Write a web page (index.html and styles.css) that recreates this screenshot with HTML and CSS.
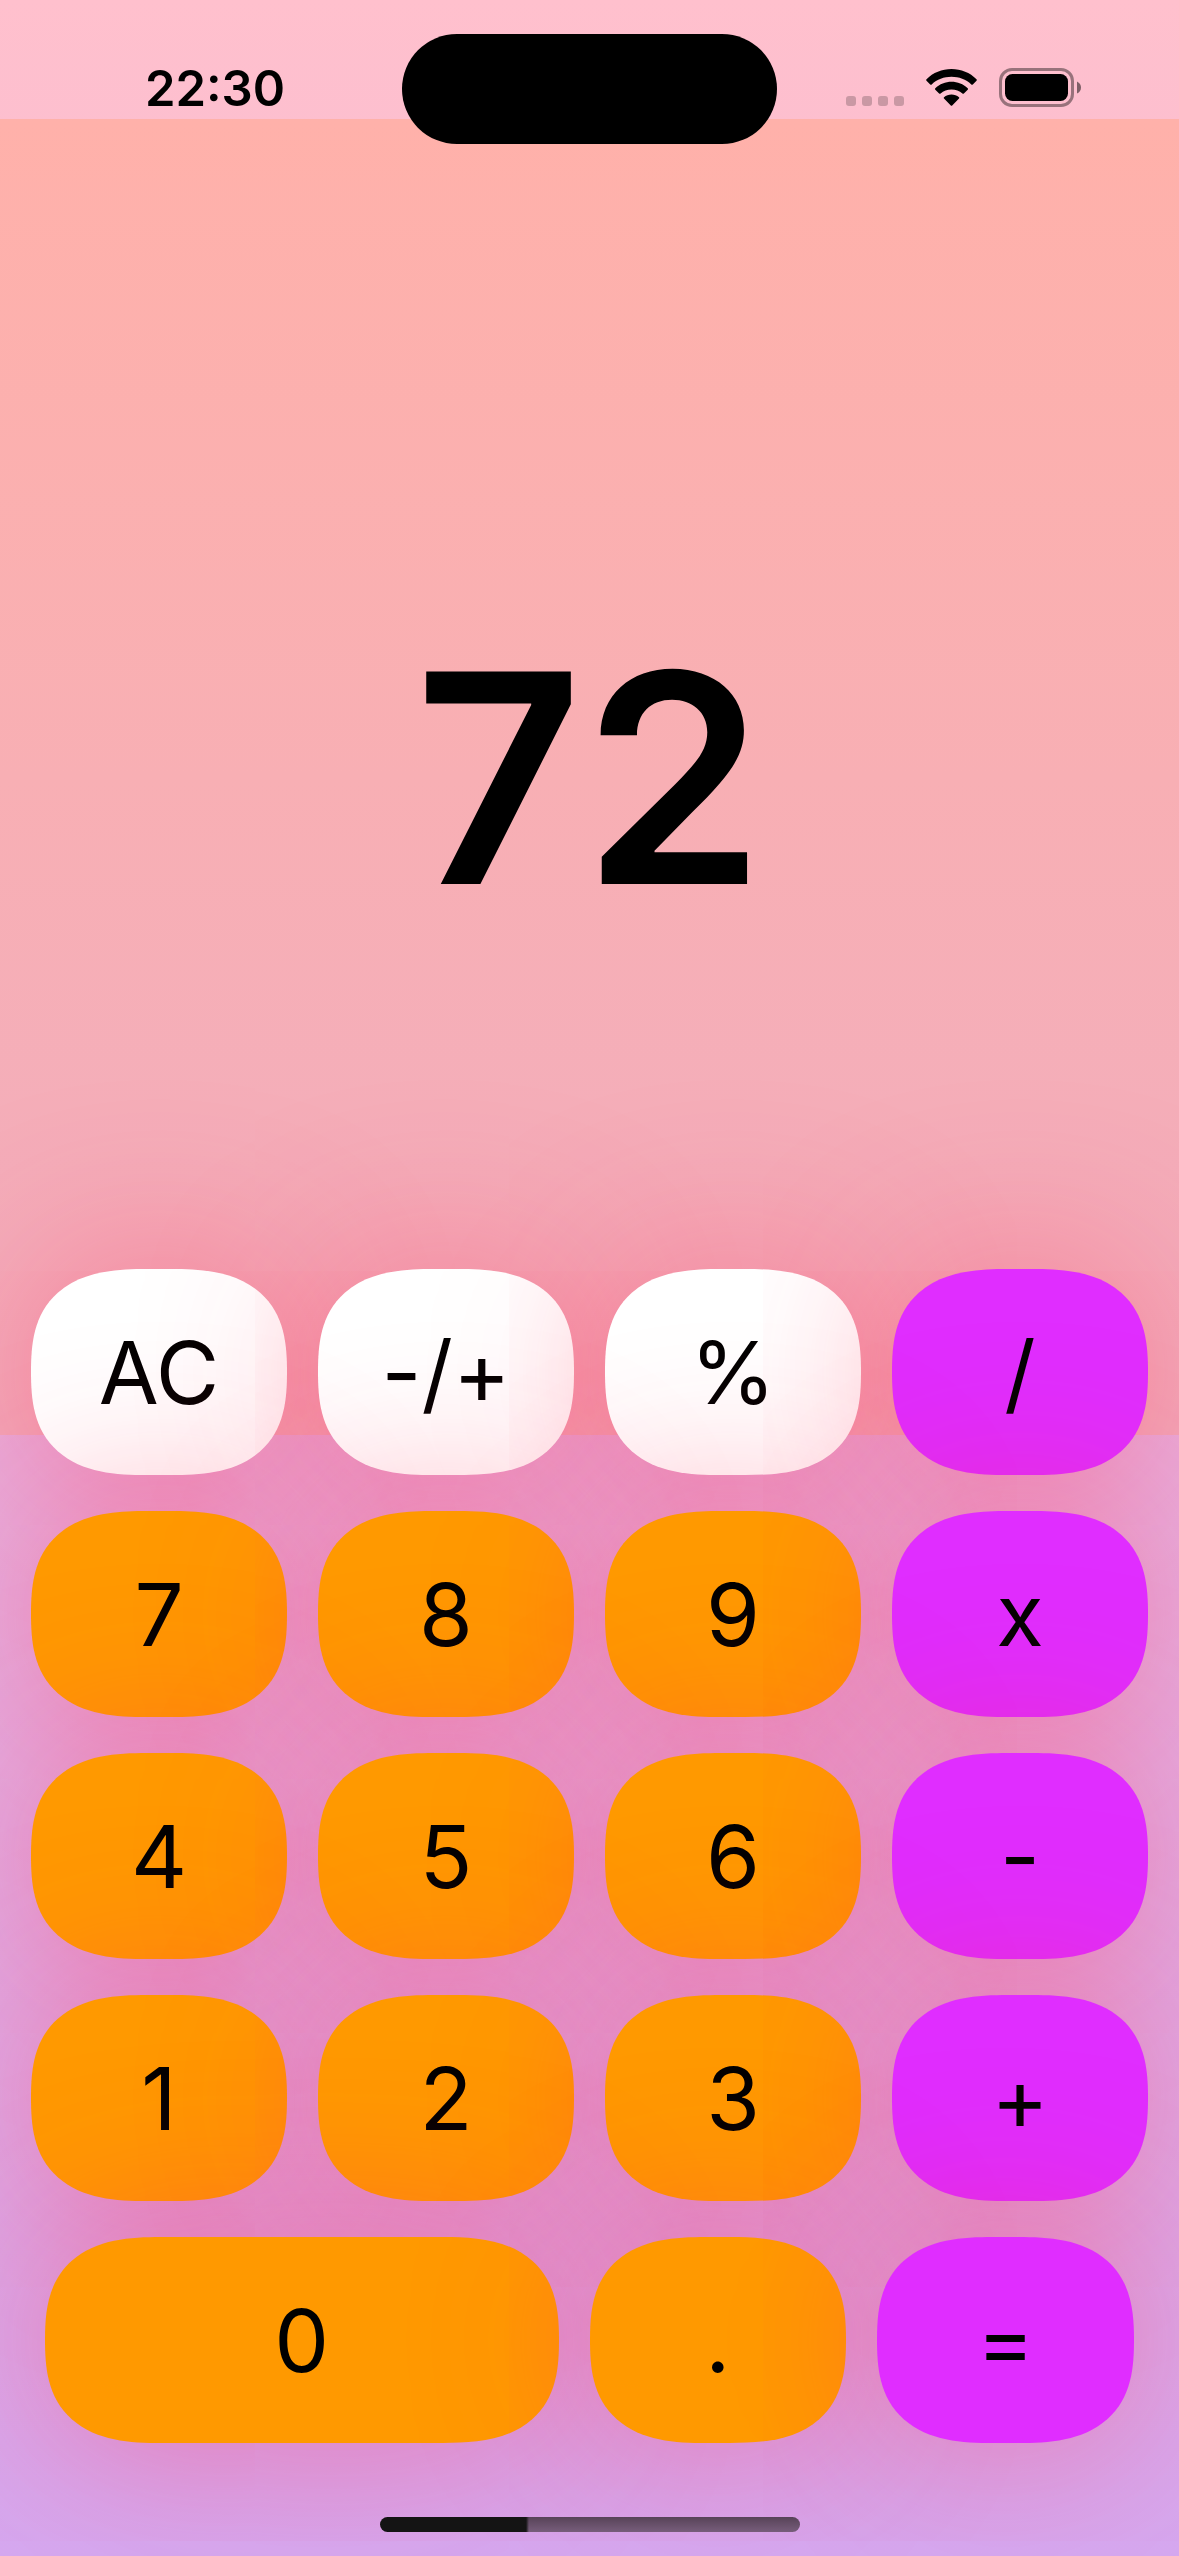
FILE: index.html
```html
<!DOCTYPE html>
<html lang="en">
<head>
<meta charset="utf-8">
<meta name="viewport" content="width=device-width, initial-scale=1">
<title>Calculator</title>
<link rel="stylesheet" href="styles.css">
</head>
<body>
<div class="app">
  <header class="status">
    <time class="clock">22:30</time>
    <div class="island"></div>
    <div class="indicators">
      <svg class="signal" width="58" height="10" viewBox="0 0 58 10" aria-hidden="true">
        <rect width="10" height="10" rx="3"/><rect x="16" width="10" height="10" rx="3"/><rect x="32" width="10" height="10" rx="3"/><rect x="48" width="10" height="10" rx="3"/>
      </svg>
      <svg class="wifi" width="51" height="37" viewBox="0 0 51 37" aria-hidden="true">
        <path d="M25.500 0C35 0 44 3.700 50.500 10.200Q51.200 11 50.500 11.700L46.800 15.400Q46 16 45.300 15.400C40 10.500 33 7.800 25.500 7.800S11 10.500 5.700 15.400Q5 16 4.200 15.400L.5 11.700Q-.2 11 .5 10.200C7 3.700 16 0 25.500 0Z"/>
        <path d="M25.500 12.800C31.500 12.800 37.300 15.100 41.700 19.200Q42.400 20 41.700 20.700L37.900 24.500Q37.200 25.100 36.400 24.500C33.500 22 29.700 20.500 25.500 20.500S17.500 22 14.600 24.500Q13.800 25.100 13.100 24.500L9.300 20.700Q8.600 20 9.300 19.200C13.700 15.100 19.500 12.800 25.500 12.800Z"/>
        <path d="M25.500 25.600C28.300 25.600 30.900 26.500 33 28.200Q33.700 28.900 33 29.600L26.200 36.400Q25.500 37 24.800 36.400L18 29.600Q17.300 28.900 18 28.200C20.100 26.500 22.700 25.600 25.500 25.600Z"/>
      </svg>
      <svg class="battery" width="82" height="39" viewBox="0 0 82 39" aria-hidden="true">
        <rect x="1.500" y="1.500" width="72" height="36" rx="11.500" fill="none" stroke="#000" stroke-width="3" opacity=".4"/>
        <rect x="6" y="6" width="63" height="27" rx="7.500"/>
        <path d="M78 13.500Q82 15.500 82 19.500T78 25.500Z" opacity=".5"/>
      </svg>
    </div>
  </header>
  <main class="calculator">
    <output class="display">72</output>
    <div class="keypad">
      <div class="row">
        <button class="key light">AC</button><button class="key light">-/+</button><button class="key light">%</button><button class="key operator">/</button>
      </div>
      <div class="row">
        <button class="key">7</button><button class="key">8</button><button class="key">9</button><button class="key operator">x</button>
      </div>
      <div class="row">
        <button class="key">4</button><button class="key">5</button><button class="key">6</button><button class="key operator">-</button>
      </div>
      <div class="row">
        <button class="key">1</button><button class="key">2</button><button class="key">3</button><button class="key operator">+</button>
      </div>
      <div class="row inset">
        <button class="key wide">0</button><button class="key">.</button><button class="key operator">=</button>
      </div>
    </div>
  </main>
  <div class="home"></div>
</div>
</body>
</html>
```
FILE: styles.css
```css
* { box-sizing: border-box; }

body {
  margin: 0;
  font-family: Inter, "Liberation Sans", sans-serif;
  color: #000;
}

.app {
  display: flex;
  flex-direction: column;
  min-height: 100vh;
  overflow: hidden;
  background: linear-gradient(#ffc0cd, #d5a8f0);
}

/* Status bar */
.status {
  display: grid;
  grid-template-columns: 1fr 375px 1fr;
  height: 119px;
  padding-top: 34px;
}

.clock {
  justify-self: center;
  margin-left: 28px;
  padding-top: 25px;
  font-size: 49px;
  font-weight: 600;
  line-height: 60px;
}

.island {
  position: relative;
  height: 110px;
  border-radius: 55px;
  background: #000;
}

.indicators {
  display: flex;
  justify-content: flex-end;
  align-items: flex-start;
  padding: 34px 98px 0 0;
}

.signal { margin: 28px 22px 0 0; opacity: .2; }
.wifi { margin: 1px 22px 0 0; }

/* Calculator */
.calculator {
  flex: 1;
  display: flex;
  flex-direction: column;
}

.display {
  flex: 1;
  display: flex;
  align-items: center;
  justify-content: center;
  padding-top: 2px;
  font-size: 292px;
  font-weight: 600;
  line-height: 1;
  background: linear-gradient(#ffb1aa, #f1adbe);
}

.keypad {
  display: flex;
  flex-direction: column;
  gap: 36px;
  margin-top: -166px;
}

.row {
  display: flex;
  gap: 31px;
  padding: 0 31px;
}

.inset { padding: 0 45px; }

.key {
  flex: 1 1 0;
  height: 206px;
  padding: 0;
  border: 0;
  border-radius: 116px / 103px;
  corner-shape: superellipse(1.4);
  background: #ff9900;
  box-shadow: 0 0 180px rgba(255, 45, 85, .46);
  color: #000;
  font: 400 87px/1 Inter, "Liberation Sans", sans-serif;
}

.wide { flex-grow: 2; }
.light { background: #fff; }
.operator { background: #e02dff; }

/* Home indicator */
.home {
  position: relative;
  align-self: center;
  width: 420px;
  height: 15px;
  margin: 74px 0 24px;
  border-radius: 8px;
  background:
    linear-gradient(90deg, #141414 146px, transparent 149px),
    linear-gradient(#574358, #775d7b);
}
```
